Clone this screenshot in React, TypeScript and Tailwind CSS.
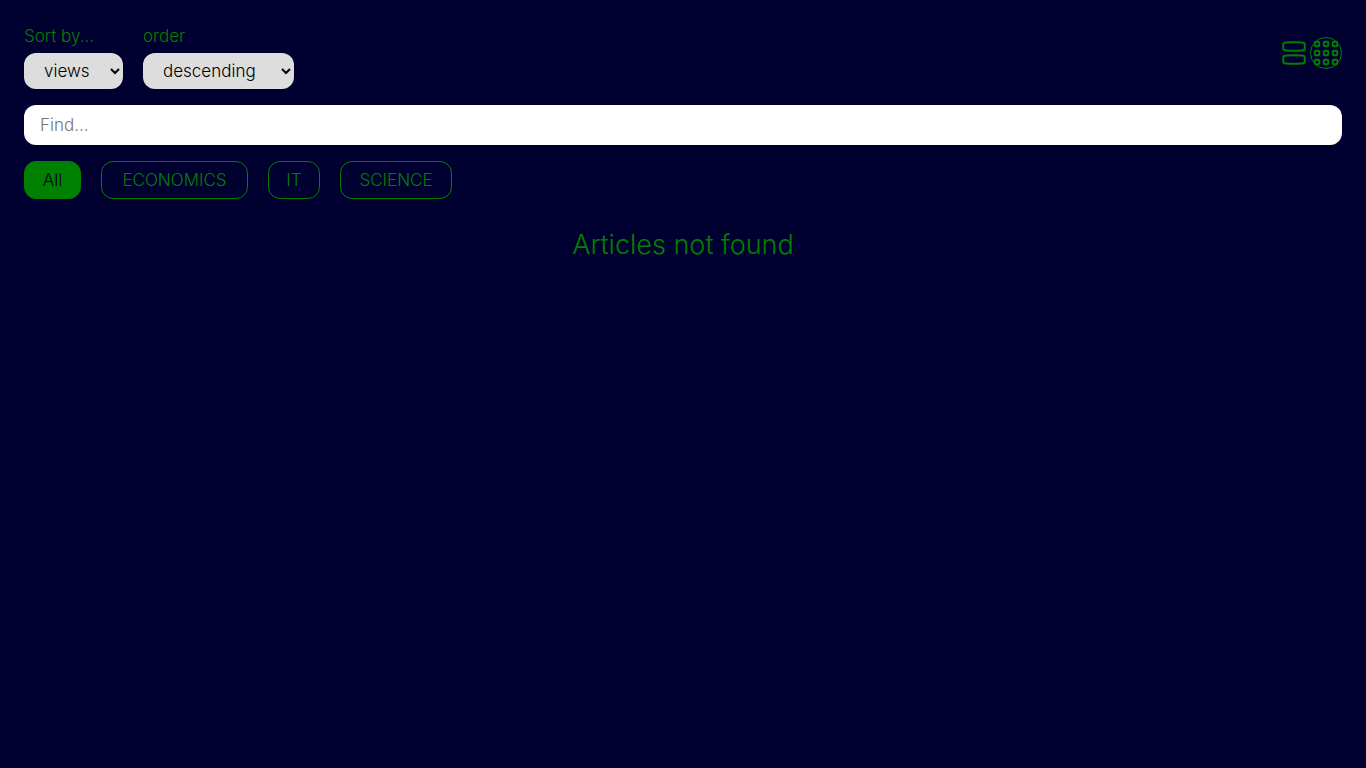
import { useState } from 'react';

const topics = [
  { name: 'All', width: 'w-[57px]' },
  { name: 'ECONOMICS', width: 'w-[147px]' },
  { name: 'IT', width: 'w-[52px]' },
  { name: 'SCIENCE', width: 'w-[112px]' },
];

const cells = [4, 13, 22];

function ListIcon() {
  return (
    <svg viewBox="0 0 24 24" className="size-6" fill="none" stroke="currentColor" strokeWidth="1.9" aria-hidden="true">
      <path d="M4 1.5Q12 1 20 1.5Q22.8 1.5 22.8 3.8V7.2Q22.8 9.5 20 9.5Q12 10 4 9.5Q1.2 9.5 1.2 7.2V3.8Q1.2 1.5 4 1.5Z" />
      <path d="M4 14.5Q12 14 20 14.5Q22.8 14.5 22.8 16.8V20.2Q22.8 22.5 20 22.5Q12 23 4 22.5Q1.2 22.5 1.2 20.2V16.8Q1.2 14.5 4 14.5Z" />
    </svg>
  );
}

function GridIcon() {
  return (
    <svg viewBox="0 0 32 32" className="size-8" fill="none" stroke="currentColor" aria-hidden="true">
      <circle cx="16" cy="16" r="15.5" />
      {cells.map((y) =>
        cells.map((x) => (
          <rect key={`${x}-${y}`} x={x + 0.75} y={y + 0.75} width="4.5" height="4.5" rx="1" strokeWidth="1.9" />
        )),
      )}
    </svg>
  );
}

export default function App() {
  const [topic, setTopic] = useState('All');

  return (
    <main className="min-h-screen bg-[#000030] p-6 font-[Inter,sans-serif] text-[17px] leading-6 font-light text-[#008000] antialiased">
      <div className="flex items-start justify-between">
        <div className="flex gap-5">
          <div className="flex flex-col items-start gap-[5px]">
            <label htmlFor="sort">Sort by...</label>
            <select id="sort" defaultValue="views" className="h-9 w-[99px] rounded-xl bg-[#dddddd] pl-4 text-black">
              <option>views</option>
              <option>title</option>
              <option>date</option>
            </select>
          </div>
          <div className="flex flex-col items-start gap-[5px]">
            <label htmlFor="order">order</label>
            <select id="order" defaultValue="descending" className="h-9 w-[151px] rounded-xl bg-[#dddddd] pl-4 text-black">
              <option>ascending</option>
              <option>descending</option>
            </select>
          </div>
        </div>
        <div className="flex items-center gap-1 pt-[13px]">
          <button type="button" aria-label="List view"><ListIcon /></button>
          <button type="button" aria-label="Grid view"><GridIcon /></button>
        </div>
      </div>

      <input
        type="search"
        aria-label="Find"
        placeholder="Find..."
        className="mt-4 block h-10 w-full rounded-xl bg-white px-4 text-black outline-none placeholder:text-[#757575]"
      />

      <div className="mt-4 flex flex-wrap gap-5">
        {topics.map(({ name, width }) => (
          <button
            key={name}
            type="button"
            aria-pressed={topic === name}
            onClick={() => setTopic(name)}
            className={`${width} h-[38px] rounded-xl border border-[#008000] ${topic === name ? 'bg-[#008000] text-[#000030]' : ''}`}
          >
            {name}
          </button>
        ))}
      </div>

      <h1 className="mt-[30px] text-center text-[27px] leading-8">Articles not found</h1>
    </main>
  );
}
